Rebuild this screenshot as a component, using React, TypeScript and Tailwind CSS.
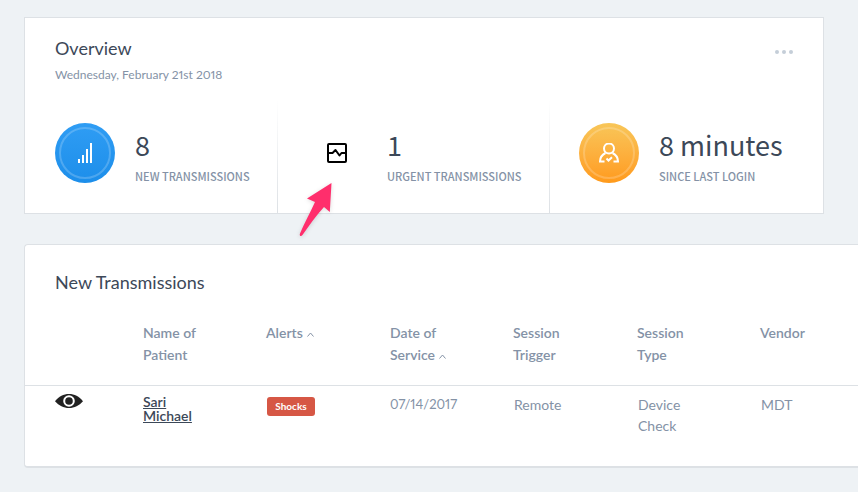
import type { ReactNode } from "react";

const display = "font-['Noto_Sans_CJK_SC',sans-serif]";

function Badge({ tone, children }: { tone: string; children: ReactNode }) {
  return (
    <div className={`flex size-[60px] shrink-0 rounded-full bg-linear-to-b p-1 ${tone}`}>
      <div className="flex flex-1 items-center justify-center rounded-full border-2 border-white/20">{children}</div>
    </div>
  );
}

function BarsIcon() {
  return (
    <svg width="14" height="20" viewBox="0 0 14 20" fill="#fff" aria-hidden="true">
      <path d="M0 16h2v4H0zM4 12h2v8H4zM8 6h2v14H8zM12 0h2v20h-2z" />
    </svg>
  );
}

function PulseIcon() {
  return (
    <svg width="20" height="20" viewBox="0 0 20 20" fill="none" stroke="#000" strokeWidth="2" strokeLinejoin="round" aria-hidden="true">
      <rect x="1" y="1" width="18" height="18" rx="1" />
      <path d="M1 10h4.500l3-3 4 5.500 2-2.500H19" />
    </svg>
  );
}

function UserIcon() {
  return (
    <svg width="20" height="20" viewBox="0 0 20 20" fill="none" stroke="#fff" strokeWidth="2" aria-hidden="true">
      <circle cx="10" cy="5.500" r="5" />
      <path d="M5.500 18.500H1c0-4 2.500-7 5.500-8.500M14.500 18.500H19c0-4-2.500-7-5.500-8.500" />
      <path d="M7.500 15.500l2 2 3.500-3.200" />
    </svg>
  );
}

function EyeIcon() {
  return (
    <svg width="28" height="14" viewBox="0 0 28 14" aria-hidden="true">
      <path d="M0 7.200C4 2.500 8.500 0 14 0s10 2.500 14 7.200C24 11.500 19.500 14 14 14S4 11.500 0 7.200z" fill="#222" />
      <circle cx="14" cy="7" r="4.800" fill="#222" stroke="#fff" strokeWidth="2" />
    </svg>
  );
}

function Caret() {
  return (
    <svg className="ml-1 inline-block" width="7" height="5" viewBox="0 0 7 5" fill="none" stroke="#8492a6" aria-hidden="true">
      <path d="M.5 4.500l3-3.500 3 3.500" />
    </svg>
  );
}

function Stat({ icon, value, label, last }: { icon: ReactNode; value: string; label: string; last?: boolean }) {
  return (
    <div className="flex justify-between">
      <div className="flex gap-5 pt-6 pl-[29px]">
        {icon}
        <div className={`whitespace-nowrap ${display}`}>
          <div className="text-[27px] leading-[44px] text-[#3c4858]">{value}</div>
          <div className="text-[11px] leading-[18px] font-medium text-[#8492a6]">{label}</div>
        </div>
      </div>
      {!last && <div className="w-px shrink-0 bg-linear-to-b from-white to-[#dde1e5]" />}
    </div>
  );
}

export default function App() {
  const head = "pr-12 align-top text-[14px] leading-[22px] font-semibold";
  const cell = "pt-2 pr-12 pl-px align-top text-[14px] leading-[21px]";
  return (
    <main className="min-h-screen overflow-hidden bg-[#eef2f5] pt-[17px] pb-6 pl-6 font-['Lato',sans-serif] text-[#8492a6]">
      <section className="relative mr-[34px] border border-[#dde1e5] bg-white">
        <header className="flex items-start justify-between px-[30px] pt-[18px]">
          <div>
            <h1 className="text-[18px] leading-6 text-[#3c4858]">Overview</h1>
            <p className="mt-[5px] text-[12px] leading-5 proportional-nums">Wednesday, February 21st 2018</p>
          </div>
          <button type="button" aria-label="More options" className="mt-[14px] flex gap-[3px]">
            <span className="size-1 rounded-full bg-[#c5ced8]" />
            <span className="size-1 rounded-full bg-[#c5ced8]" />
            <span className="size-1 rounded-full bg-[#c5ced8]" />
          </button>
        </header>
        <div className="mt-[14px] grid h-[114px] grid-cols-[252fr_272fr_273fr] pl-px">
          <Stat icon={<Badge tone="from-[#2f9df4] to-[#1c8eea]"><BarsIcon /></Badge>} value="8" label="NEW TRANSMISSIONS" />
          <Stat
            icon={<div className="flex size-[60px] shrink-0 items-center justify-center"><PulseIcon /></div>}
            value="1"
            label="URGENT TRANSMISSIONS"
          />
          <Stat icon={<Badge tone="from-[#f8c658] to-[#ff9a1a]"><UserIcon /></Badge>} value="8 minutes" label="SINCE LAST LOGIN" last />
        </div>
        <svg className="absolute top-[164px] left-[274px] drop-shadow-sm" width="34" height="56" viewBox="0 0 34 56" aria-hidden="true">
          <path d="M32.500 1L8 16.500l8 3.500C11 31 5 42 1 51.500c-1 2.500 1 3.500 2.500 1.500C10 44 17 33.500 25 25l5.800 5z" fill="#ff2e6c" />
        </svg>
      </section>

      <section className="mt-[30px] rounded-l border border-r-0 border-b-2 border-[#dde1e5] bg-white pt-[25px] pb-[30px]">
        <h2 className="px-[30px] text-[18px] leading-6 text-[#3c4858]">New Transmissions</h2>
        <table className="mt-7 w-full table-fixed text-left">
          <colgroup>
            <col className="w-[118px]" />
            <col className="w-[123px]" />
            <col className="w-[124px]" />
            <col className="w-[123px]" />
            <col className="w-[124px]" />
            <col className="w-[123px]" />
            <col />
          </colgroup>
          <thead>
            <tr className="h-[63px] border-b border-[#dde1e5]">
              <th aria-label="View" />
              <th className={head}>Name of Patient</th>
              <th className={head}><span className="whitespace-nowrap">Alerts<Caret /></span></th>
              <th className={head}>Date of <span className="whitespace-nowrap">Service<Caret /></span></th>
              <th className={head}>Session Trigger</th>
              <th className={head}>Session Type</th>
              <th className="align-top text-[14px] leading-[22px] font-semibold">Vendor</th>
            </tr>
          </thead>
          <tbody>
            <tr>
              <td className="pt-2 pl-[30px] align-top">
                <button type="button" aria-label="View transmission" className="block"><EyeIcon /></button>
              </td>
              <td className="pt-[9px] pr-12 align-top text-[14px] leading-[14px]">
                <a href="#patient" className="block font-semibold text-[#3c4858] underline">Sari Michael</a>
              </td>
              <td className="pt-[11px] pl-px align-top">
                <span className="block w-12 rounded-[3px] bg-[#d65745] text-center text-[10px] leading-[19px] font-bold text-white">Shocks</span>
              </td>
              <td className="pt-2 align-top text-[13px] leading-[21px] proportional-nums">07/14/2017</td>
              <td className={cell}>Remote</td>
              <td className={cell}>Device Check</td>
              <td className="pt-2 pl-px align-top text-[14px] leading-[21px]">MDT</td>
            </tr>
          </tbody>
        </table>
      </section>
    </main>
  );
}
